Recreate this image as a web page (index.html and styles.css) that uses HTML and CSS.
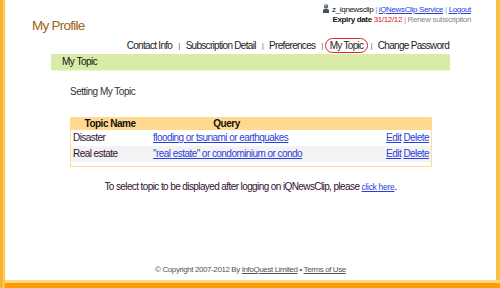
FILE: index.html
```html
<!DOCTYPE html>
<html>
<head>
<meta charset="utf-8">
<link rel="stylesheet" href="styles.css">
</head>
<body>
<div class="page">
  <div class="main">
    <header class="top">
      <h1 class="title">My Profile</h1>
      <div class="account">
        <div class="acc-line">
          <svg class="user-ico" width="6" height="9" viewBox="0 0 6 9"><circle cx="3" cy="2.4" r="2.2" fill="#556677"/><circle cx="2.4" cy="1.8" r="0.8" fill="#cfd8e0"/><path d="M0 9 L0 6.5 Q0 4.8 3 4.8 Q6 4.8 6 6.5 L6 9 Z" fill="#3d4e66"/></svg>
          <span class="uname">z_iqnewsclip</span> <span class="sep">|</span> <a class="lnk" href="#">iQNewsClip Service</a> <span class="sep">|</span> <a class="lnk" href="#">Logout</a>
        </div>
        <div class="acc-line">
          <b>Expiry date</b> <span class="red">31/12/12</span> <span class="sep">|</span> <span class="gray">Renew subscription</span>
        </div>
      </div>
    </header>
    <nav class="tabs">
      <span class="tab">Contact Info</span><span class="bar-sep">|</span>
      <span class="tab">Subscription Detail</span><span class="bar-sep">|</span>
      <span class="tab">Preferences</span><span class="bar-sep">|</span>
      <span class="tab active">My Topic</span><span class="bar-sep">|</span>
      <span class="tab">Change Password</span>
    </nav>
    <div class="section-bar">My Topic</div>
    <div class="content">
      <h2 class="sub">Setting My Topic</h2>
      <table class="topics">
        <thead>
          <tr><th class="c1">Topic Name</th><th class="c2">Query</th><th class="c3"></th></tr>
        </thead>
        <tbody>
          <tr><td>Disaster</td><td class="q"><a class="lnk" href="#">flooding or tsunami or earthquakes</a></td><td class="act"><a class="lnk" href="#">Edit</a> <a class="lnk" href="#">Delete</a></td></tr>
          <tr class="alt"><td>Real estate</td><td class="q"><a class="lnk" href="#">"real estate" or condominium or condo</a></td><td class="act"><a class="lnk" href="#">Edit</a> <a class="lnk" href="#">Delete</a></td></tr>
          <tr class="pad"><td colspan="3"></td></tr>
        </tbody>
      </table>
      <p class="note">To select topic to be displayed after logging on iQNewsClip, please <a class="lnk small" href="#">click here</a>.</p>
    </div>
    <footer class="copy">© Copyright 2007-2012 By <a class="flink" href="#">InfoQuest Limited</a> • <a class="flink" href="#">Terms of Use</a></footer>
  </div>
  <div class="bottom"></div>
</div>
</body>
</html>
```
FILE: styles.css
```css
html, body {
  margin: 0;
  padding: 0;
  background: #fff;
}
body {
  font-family: "Liberation Sans", Arial, sans-serif;
  font-size: 10px;
  letter-spacing: -0.5px;
  color: #222;
}
.page {
  width: 500px;
  height: 288px;
  display: flex;
  flex-direction: column;
  background: linear-gradient(to right, #f5b52e 0, #f5b52e 3px, #fcd46a 3px, #fcd46a 4px, #f7c040 4px, #f7c040 5px, #fff 5px, #fff 496px, #f9c23d 496px, #f9c23d 500px);
}
.main {
  flex: 1;
  display: flex;
  flex-direction: column;
  margin: 0 4px 0 5px;
  background: #fff;
}
.bottom {
  height: 8px;
  margin-left: 5px;
  background: linear-gradient(to bottom, #fedc8a 0, #fcd57a 3px, #ff9c00 3px, #ff9c00 8px);
}
.top {
  display: flex;
  justify-content: space-between;
  align-items: flex-start;
  padding: 4px 25px 0 27px;
  height: 32px;
}
.title {
  margin: 14px 0 0 0;
  font-size: 13.5px;
  letter-spacing: -0.75px;
  font-weight: normal;
  color: #9a6414;
  line-height: 16px;
}
.account {
  text-align: right;
  font-size: 8px;
  letter-spacing: -0.35px;
  line-height: 10px;
  color: #111;
}
.acc-line {
  white-space: nowrap;
}
.user-ico {
  vertical-align: -1px;
  margin-right: 1px;
}
.sep {
  color: #8899bb;
}
.red {
  color: #d42020;
}
.gray {
  color: #888;
}
.lnk {
  color: #2b3fe0;
  text-decoration: underline;
}
.tabs {
  display: flex;
  justify-content: flex-end;
  align-items: center;
  padding-right: 47px;
  height: 16px;
  margin-top: 1px;
  font-size: 10px;
  letter-spacing: -0.7px;
  color: #222;
}
.bar-sep {
  color: #666;
  font-size: 8px;
  margin: 0 6px;
}
.tab.active {
  border: 1px solid #e0202a;
  border-radius: 10px;
  padding: 1px 4px;
  margin: 0 -4px 0 -4px;
}
.section-bar {
  margin: 1px 0 0 46px;
  width: 388px;
  height: 16px;
  line-height: 16px;
  padding-left: 11px;
  background: #d8eca8;
  border-bottom: 1px solid #f2f5dc;
  font-size: 10px;
  color: #111;
}
.content {
  padding-left: 65px;
  flex: 1;
}
.sub {
  margin: 14px 0 0 0;
  font-size: 10px;
  font-weight: normal;
  color: #333;
  line-height: 14px;
}
.topics {
  margin-top: 18px;
  width: 362px;
  border-collapse: collapse;
  border: 1px solid #ffdc99;
  font-size: 10px;
  letter-spacing: -0.55px;
}
.topics th {
  background: #ffd98f;
  height: 12px;
  line-height: 12px;
  padding: 0;
  font-weight: bold;
  color: #111;
  letter-spacing: -0.5px;
}
.topics th.c1 { width: 78px; }
.topics th.c2 { width: 110px; }
.topics td {
  height: 16px;
  line-height: 16px;
  padding: 0 2px;
  color: #301030;
  white-space: nowrap;
}
.topics tr.alt td {
  background: #f3f3f3;
}
.topics tr.pad td {
  height: 4px;
  line-height: 4px;
}
.topics td.q {
  padding-left: 4px;
}
.topics td.act {
  text-align: right;
}
.note {
  margin: 14px 0 0 -65px;
  text-align: center;
  color: #301030;
  font-size: 10px;
  letter-spacing: -0.6px;
}
.small {
  font-size: 8.5px;
  letter-spacing: -0.3px;
}
.copy {
  text-align: center;
  font-size: 8px;
  letter-spacing: -0.4px;
  color: #555;
  padding-bottom: 6px;
}
.flink {
  color: #555;
  text-decoration: underline;
}
```
